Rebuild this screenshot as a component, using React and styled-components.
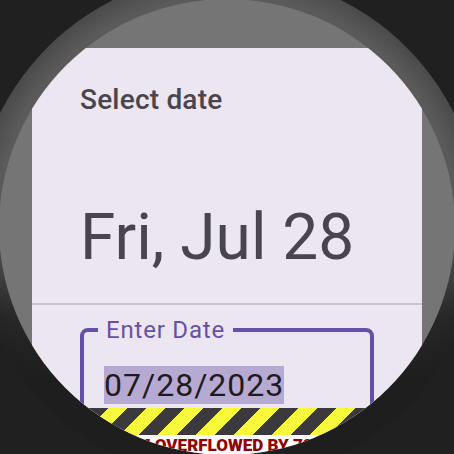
import React from "react";
import styled, { createGlobalStyle } from "styled-components";

const GlobalStyle = createGlobalStyle`
  html, body {
    margin: 0;
    padding: 0;
    background: #202020;
  }
  body {
    width: 454px;
    height: 454px;
    overflow: hidden;
    font-family: Roboto, "Noto Sans", sans-serif;
  }
`;

const Frame = styled.div`
  width: 454px;
  height: 454px;
  display: flex;
  align-items: center;
  justify-content: center;
  overflow: hidden;
`;

const Bezel = styled.div`
  flex: none;
  width: 508px;
  height: 508px;
  border-radius: 50%;
  display: flex;
  align-items: center;
  justify-content: center;
  background:
    linear-gradient(180deg, rgba(30, 30, 30, 0) 50%, rgba(30, 30, 30, 0.85) 68%, #1e1e1e 80%),
    radial-gradient(circle at 50% 50%, #5a5a5a 0, #5a5a5a 232px, #4a4a4a 254px);
`;

const Screen = styled.div`
  flex: none;
  width: 456px;
  height: 456px;
  box-sizing: border-box;
  border-radius: 50%;
  overflow: hidden;
  background: #757575;
  padding: 49px 0 0 33px;
`;

const Dialog = styled.div`
  width: 390px;
  display: flex;
  flex-direction: column;
`;

const DialogBody = styled.div`
  position: relative;
  height: 387px;
  overflow: hidden;
  background: #ece6f0;
  display: flex;
  flex-direction: column;
`;

const Header = styled.div`
  padding: 35px 48px 28px;
  display: flex;
  flex-direction: column;
  gap: 84px;
  color: #49454f;
`;

const Title = styled.div`
  font-size: 28px;
  line-height: 33px;
  font-weight: 500;
  letter-spacing: 0.2px;
`;

const Headline = styled.div`
  font-size: 64px;
  line-height: 75px;
  font-weight: 400;
`;

const Divider = styled.div`
  flex: none;
  height: 2px;
  background: #cac4d0;
`;

const InputArea = styled.div`
  padding: 11px 48px 0;
`;

const Field = styled.fieldset`
  margin: 0;
  min-width: 0;
  padding: 23px 20px 20px;
  border: 4px solid #6750a4;
  border-radius: 8px;
`;

const Label = styled.legend`
  margin-left: -6px;
  padding: 0 8px;
  font-size: 24px;
  line-height: 28px;
  letter-spacing: 0.8px;
  color: #6750a4;
`;

const ValueLine = styled.div`
  font-size: 32px;
  line-height: 37px;
  letter-spacing: 1px;
  color: #1d1b20;
`;

const Selected = styled.span`
  background: #b7aad2;
`;

const Stripes = styled.div`
  position: absolute;
  left: 0;
  right: 0;
  bottom: 0;
  height: 27px;
  background: repeating-linear-gradient(
    135deg,
    #f9f93b 0 13.4px,
    #3b393c 13.4px 26.9px
  );
`;

const OverflowNote = styled.div`
  display: flex;
  justify-content: center;
`;

const NoteText = styled.span`
  background: #ffffff;
  color: #900000;
  font-size: 17px;
  line-height: 20px;
  font-weight: 900;
  white-space: nowrap;
`;

export default function App() {
  return (
    <>
      <GlobalStyle />
      <Frame>
        <Bezel>
          <Screen>
            <Dialog>
              <DialogBody>
                <Header>
                  <Title>Select date</Title>
                  <Headline>Fri, Jul 28</Headline>
                </Header>
                <Divider />
                <InputArea>
                  <Field>
                    <Label>Enter Date</Label>
                    <ValueLine>
                      <Selected>07/28/2023</Selected>
                    </ValueLine>
                  </Field>
                </InputArea>
                <Stripes />
              </DialogBody>
              <OverflowNote>
                <NoteText>BOTTOM OVERFLOWED BY 72 PIXELS</NoteText>
              </OverflowNote>
            </Dialog>
          </Screen>
        </Bezel>
      </Frame>
    </>
  );
}
